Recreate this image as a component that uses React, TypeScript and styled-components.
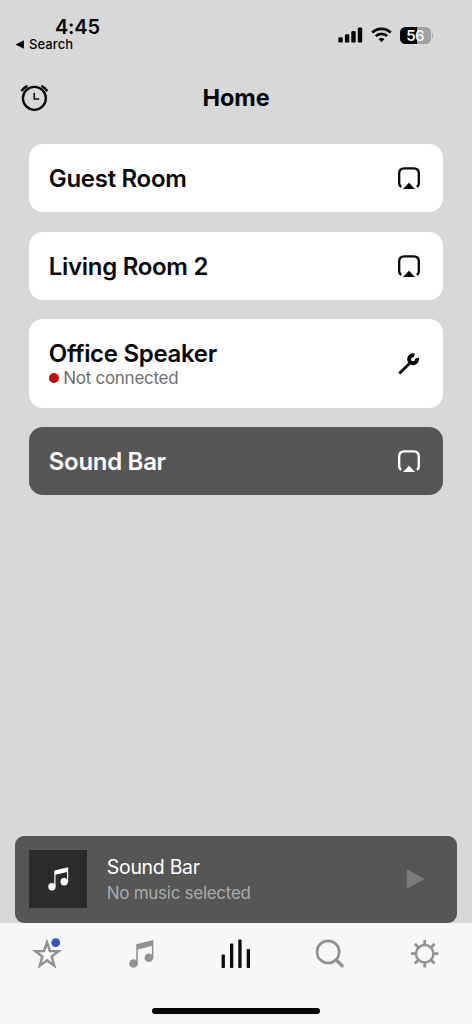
import React from 'react';
import styled, { createGlobalStyle } from 'styled-components';

const GlobalStyle = createGlobalStyle`
  * { box-sizing: border-box; }
  body {
    margin: 0;
    background: #d8d8d8;
    font-family: Inter, "Liberation Sans", sans-serif;
    -webkit-font-smoothing: antialiased;
  }
  svg { display: block; flex: none; overflow: visible; }
`;

const Screen = styled.div`
  width: 472px;
  height: 1024px;
  display: flex;
  flex-direction: column;
  background: #d8d8d8;
  color: #060606;
  overflow: hidden;
  white-space: nowrap;
`;

const StatusBar = styled.header`
  height: 60px;
  display: flex;
  justify-content: space-between;
  padding: 17px 39px 0 15px;
`;

const Clock = styled.div`
  padding-left: 40px;
  font-size: 20px;
  line-height: 20px;
  font-weight: 600;
  letter-spacing: -0.2px;
`;

const BackLink = styled.div`
  display: flex;
  align-items: center;
  gap: 5px;
  font-size: 13px;
  line-height: 14px;
  font-weight: 500;
  letter-spacing: 0.1px;
`;

const Indicators = styled.div`
  display: flex;
  align-items: center;
  gap: 8px;
  height: 36px;
`;

const Battery = styled.div`
  display: flex;
  align-items: center;
  gap: 1px;
`;

const BatteryBody = styled.div`
  width: 31px;
  height: 17px;
  border-radius: 5.5px;
  background: linear-gradient(90deg, #060606 56%, #a1a1a1 56%);
  color: #f2f2f2;
  font-size: 15px;
  line-height: 17px;
  font-weight: 600;
  letter-spacing: -0.8px;
  text-align: center;
`;

const BatteryTip = styled.div`
  width: 1.5px;
  height: 5px;
  border-radius: 0 2px 2px 0;
  background: #a6a6a6;
`;

const TitleBar = styled.div`
  height: 75px;
  display: grid;
  grid-template-columns: 60px 1fr 60px;
  align-items: center;
  padding: 0 20px;
  margin-bottom: 9px;
`;

const Title = styled.h1`
  margin: 0;
  text-align: center;
  font-size: 23.5px;
  line-height: 28px;
  font-weight: 650;
  letter-spacing: -0.05px;
`;

const RoomList = styled.main`
  flex: 1;
  display: flex;
  flex-direction: column;
  gap: 19.5px;
  padding: 0.4px 29.4px 0;
`;

const RoomCard = styled.section<{ $active?: boolean; $tall?: boolean }>`
  height: ${(p) => (p.$tall ? 88.6 : 68)}px;
  display: flex;
  align-items: center;
  justify-content: space-between;
  padding: 0 22px 0 19.4px;
  border-radius: 14px;
  background: ${(p) => (p.$active ? '#565656' : '#ffffff')};
  color: ${(p) => (p.$active ? '#ffffff' : '#060606')};
`;

const RoomText = styled.div`
  padding-top: 2px;
`;

const RoomName = styled.div`
  font-size: 24px;
  line-height: 28px;
  font-weight: 600;
  letter-spacing: -0.3px;
`;

const RoomStatus = styled.div`
  display: flex;
  align-items: center;
  gap: 4.5px;
  margin-top: -1px;
  color: #6e6e6e;
  font-size: 17px;
  line-height: 22px;
  letter-spacing: -0.28px;
`;

const StatusDot = styled.span`
  width: 10px;
  height: 10px;
  border-radius: 50%;
  background: #c40808;
`;

const MiniPlayer = styled.section`
  height: 87.4px;
  display: flex;
  align-items: center;
  margin: 0 14.6px;
  padding: 0 32px 0 14.8px;
  border-radius: 9px;
  background: #565656;
`;

const Artwork = styled.div`
  width: 58px;
  height: 58px;
  display: grid;
  place-items: center;
  background: #2b2b2b;
`;

const TrackInfo = styled.div`
  flex: 1;
  padding: 3px 0 0 19.4px;
`;

const TrackRoom = styled.div`
  color: #ffffff;
  font-size: 19.5px;
  line-height: 26px;
  letter-spacing: -0.3px;
`;

const TrackNote = styled.div`
  color: #aaaaaa;
  font-size: 17px;
  line-height: 27px;
  letter-spacing: -0.28px;
`;

const BottomBar = styled.footer`
  height: 101px;
  display: flex;
  flex-direction: column;
  align-items: center;
  background: #f7f7f7;
`;

const Tabs = styled.nav`
  width: 100%;
  height: 61px;
  display: grid;
  grid-template-columns: repeat(5, 94.4px);
  justify-items: center;
  align-items: center;
  color: #929292;
`;

const HomeIndicator = styled.div`
  width: 168px;
  height: 6px;
  margin-top: 24px;
  border-radius: 3px;
  background: #000;
`;

const SignalIcon = () => (
  <svg width="25" height="16" viewBox="0 0 25 16" fill="currentColor">
    <rect x="0.3" y="10.2" width="4.4" height="5.4" rx="1.2" />
    <rect x="6.9" y="7.2" width="4.4" height="8.4" rx="1.2" />
    <rect x="13.3" y="4" width="4.4" height="11.6" rx="1.2" />
    <rect x="19.8" y="0.6" width="4.4" height="15" rx="1.2" />
  </svg>
);

const WifiIcon = () => (
  <svg width="21" height="16" viewBox="0 0 21 16" fill="none" stroke="currentColor">
    <path d="M1.2 5.6C6.3 0.5 14.7 0.5 19.8 5.6" strokeWidth="2.8" />
    <path d="M4.7 9.1C7.9 6 13.1 6 16.3 9.1" strokeWidth="2.7" />
    <path d="M10.5 15.2L7.5 12.1C9.2 10.6 11.8 10.6 13.5 12.1Z" fill="currentColor" stroke="none" />
  </svg>
);

const AlarmIcon = () => (
  <svg width="29" height="28" viewBox="0 0 29 28" fill="none" stroke="currentColor">
    <circle cx="14.4" cy="14.3" r="11.5" strokeWidth="2.3" />
    <path d="M14.2 8.8V14.9H19.2" strokeWidth="1.5" />
    <path d="M1.4 7.1Q3.6 3.6 7.4 1.8M21.4 1.8Q25.2 3.6 27.4 7.1" strokeWidth="2.5" />
  </svg>
);

const AirplayIcon = () => (
  <svg width="24" height="24" viewBox="0 0 24 24" fill="none" stroke="currentColor">
    <path
      d="M4.3 20.8C2.8 20.1 2.2 18.9 2.2 17V7.4C2.2 3.9 3.9 2.4 7.3 2.4H16.7C20.1 2.4 21.8 3.9 21.8 7.4V17C21.8 18.9 21.2 20.1 19.7 20.8"
      strokeWidth="2.3"
    />
    <path d="M12 16.7L18 23.1H6Z" fill="currentColor" stroke="none" />
  </svg>
);

const WrenchIcon = () => (
  <svg width="24" height="24" viewBox="0 0 24 24" fill="none" stroke="currentColor">
    <path d="M2.3 21.5L13 11" strokeWidth="2.9" />
    <path d="M17.3 3.5A4 4 0 1 0 19.9 6.1" strokeWidth="4" />
  </svg>
);

const NotesIcon = () => (
  <svg width="25" height="28" viewBox="0 0 25 28" fill="currentColor">
    <circle cx="4.5" cy="23.5" r="4.3" />
    <circle cx="19.8" cy="17.7" r="4.3" />
    <path d="M7.2 4.2L24.4 0V18H22.9V6L8.8 9.4V23.8H7.2Z" />
  </svg>
);

const ArtworkNotesIcon = () => (
  <svg width="22" height="24" viewBox="0 0 22 24" fill="#ffffff">
    <circle cx="4.9" cy="19.7" r="3.7" />
    <circle cx="17.2" cy="14.8" r="3.7" />
    <path d="M7.3 3.6L21.2 0.2V15H20V5L8.5 7.8V20H7.3Z" />
  </svg>
);

const PlayIcon = () => (
  <svg width="19" height="20" viewBox="0 0 19 20" fill="#7b7b7b">
    <path d="M0.8 0.3L18.5 10L0.8 19.7Z" />
  </svg>
);

const StarIcon = () => (
  <svg width="28" height="30" viewBox="0 0 28 30" fill="none">
    <path
      d="M14 3.4L16.9 12L25.6 12.2L18.7 17.5L21.2 26.7L14 21.4L6.8 26.7L9.3 17.5L2.4 12.2L11.1 12Z"
      stroke="currentColor"
      strokeWidth="2.5"
    />
    <circle cx="22.7" cy="3.6" r="4.4" fill="#3458bd" />
  </svg>
);

const BarsIcon = () => (
  <svg width="30" height="30" viewBox="0 0 30 30" fill="#0b0b0b">
    <rect x="0.6" y="15.6" width="3.3" height="13.4" rx="0.8" />
    <rect x="9" y="4.6" width="3.3" height="24.4" rx="0.8" />
    <rect x="17.3" y="0.4" width="3.3" height="28.6" rx="0.8" />
    <rect x="25.7" y="10" width="3.3" height="19" rx="0.8" />
  </svg>
);

const SearchIcon = () => (
  <svg width="30" height="30" viewBox="0 0 30 30" fill="none" stroke="currentColor">
    <circle cx="13.1" cy="12.9" r="11.1" strokeWidth="2.7" />
    <path d="M21 20.8L27.2 26.8" strokeWidth="3.4" strokeLinecap="round" />
  </svg>
);

const GearIcon = () => (
  <svg width="28" height="28" viewBox="0 0 28 28" fill="none" stroke="currentColor">
    <circle cx="13.7" cy="13.7" r="8.7" strokeWidth="2.4" />
    <path
      d="M13.7 0V4.8M13.7 22.7V27.4M0 13.7H4.8M22.7 13.7H27.4M3.8 3.8L7.2 7.2M20.2 20.2L23.6 23.6M3.8 23.6L7.2 20.2M20.2 7.2L23.6 3.8"
      strokeWidth="2.8"
    />
  </svg>
);

export default function App() {
  return (
    <>
      <GlobalStyle />
      <Screen>
        <StatusBar>
          <div>
            <Clock>4:45</Clock>
            <BackLink>
              <svg width="9" height="9" viewBox="0 0 9 9" fill="currentColor">
                <path d="M0.5 4.5L8.9 0.2V8.8Z" />
              </svg>
              Search
            </BackLink>
          </div>
          <Indicators>
            <SignalIcon />
            <WifiIcon />
            <Battery>
              <BatteryBody>56</BatteryBody>
              <BatteryTip />
            </Battery>
          </Indicators>
        </StatusBar>

        <TitleBar>
          <AlarmIcon />
          <Title>Home</Title>
        </TitleBar>

        <RoomList>
          <RoomCard>
            <RoomText>
              <RoomName>Guest Room</RoomName>
            </RoomText>
            <AirplayIcon />
          </RoomCard>
          <RoomCard>
            <RoomText>
              <RoomName>Living Room 2</RoomName>
            </RoomText>
            <AirplayIcon />
          </RoomCard>
          <RoomCard $tall>
            <RoomText>
              <RoomName>Office Speaker</RoomName>
              <RoomStatus>
                <StatusDot />
                Not connected
              </RoomStatus>
            </RoomText>
            <WrenchIcon />
          </RoomCard>
          <RoomCard $active>
            <RoomText>
              <RoomName>Sound Bar</RoomName>
            </RoomText>
            <AirplayIcon />
          </RoomCard>
        </RoomList>

        <MiniPlayer>
          <Artwork>
            <ArtworkNotesIcon />
          </Artwork>
          <TrackInfo>
            <TrackRoom>Sound Bar</TrackRoom>
            <TrackNote>No music selected</TrackNote>
          </TrackInfo>
          <PlayIcon />
        </MiniPlayer>

        <BottomBar>
          <Tabs>
            <StarIcon />
            <NotesIcon />
            <BarsIcon />
            <SearchIcon />
            <GearIcon />
          </Tabs>
          <HomeIndicator />
        </BottomBar>
      </Screen>
    </>
  );
}
